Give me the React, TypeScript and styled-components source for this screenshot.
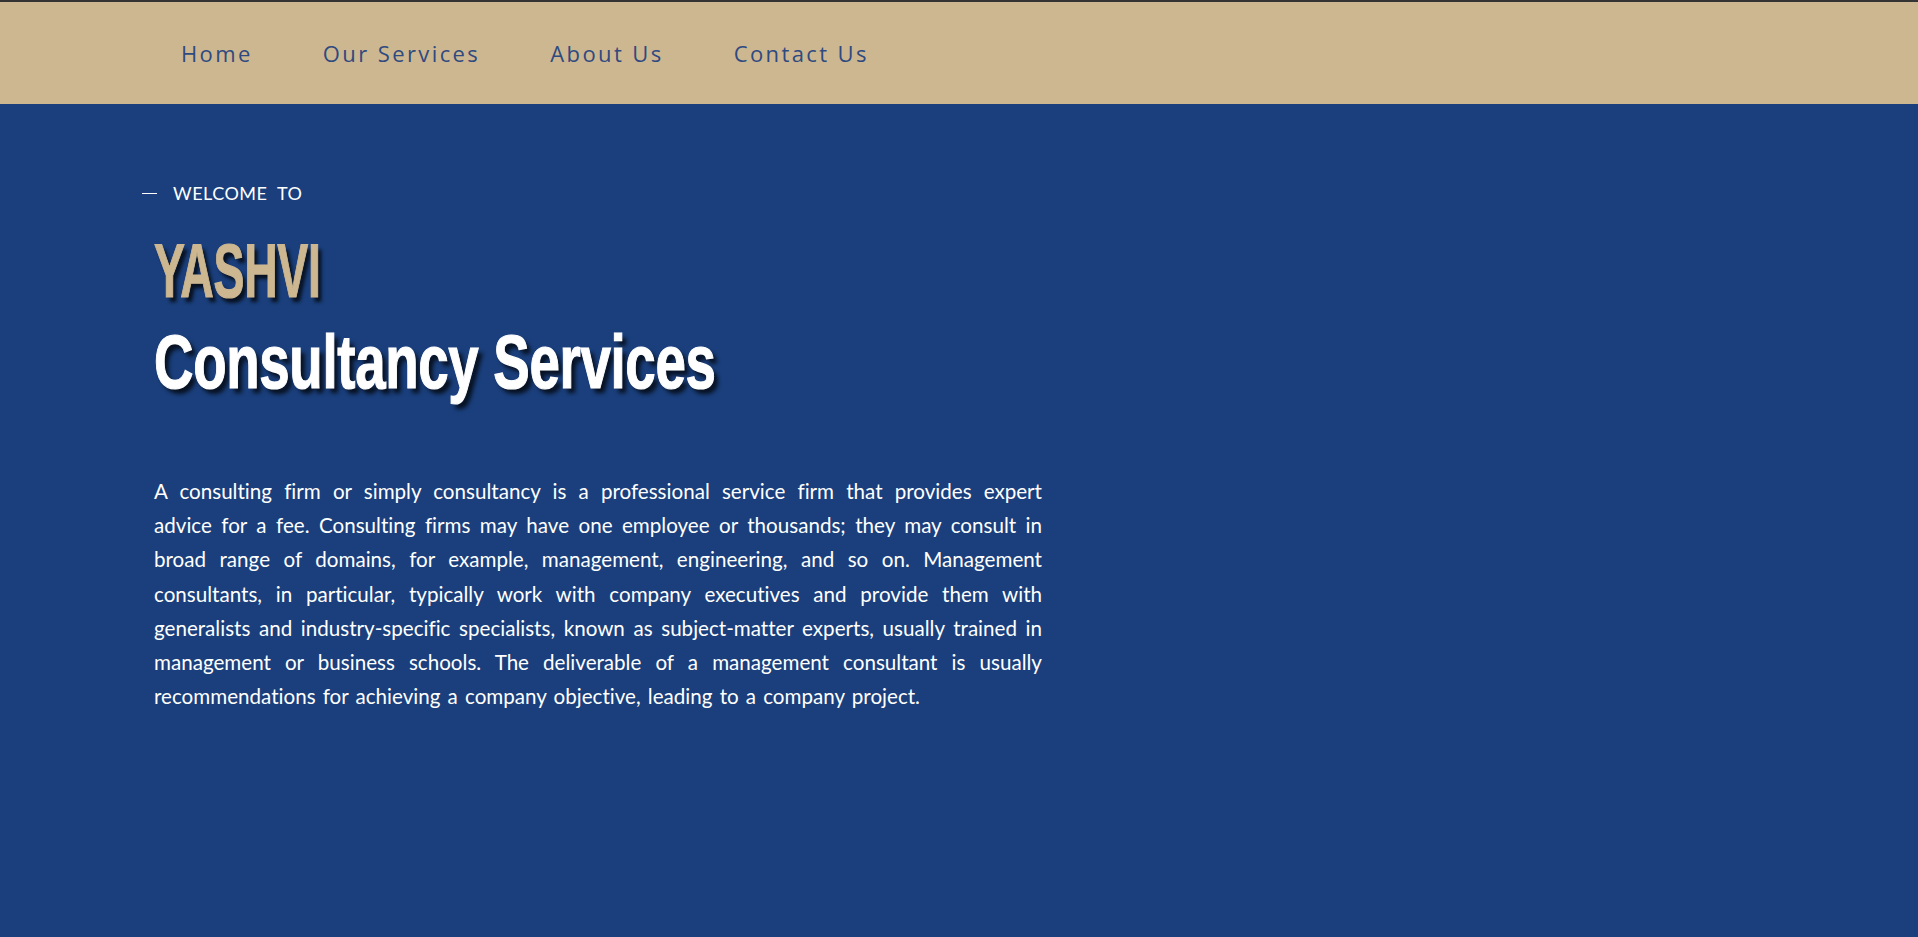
import React from "react";
import styled, { createGlobalStyle } from "styled-components";

const GlobalStyle = createGlobalStyle`
  html, body {
    margin: 0;
    padding: 0;
    background: #1a3f7c;
  }
  * { box-sizing: border-box; }
`;

const Page = styled.div`
  min-height: 937px;
  background: #1a3f7c;
  display: flex;
  flex-direction: column;
`;

const Header = styled.header`
  height: 104px;
  border-top: 2px solid #343434;
  background: #cdb791;
  display: flex;
  align-items: center;
  padding-left: 181px;
`;

const NavList = styled.nav`
  display: flex;
  align-items: center;
  gap: 70px;
`;

const NavLink = styled.a`
  font-family: "Open Sans", "Noto Sans", sans-serif;
  font-size: 22px;
  font-weight: 400;
  letter-spacing: 2.4px;
  color: #2f4a80;
  text-decoration: none;
  line-height: 30px;
  cursor: pointer;
`;

const Hero = styled.section`
  padding: 78px 0 0 154px;
  display: flex;
  flex-direction: column;
  align-items: flex-start;
`;

const Eyebrow = styled.div`
  display: flex;
  align-items: center;
  margin-left: -12px;
  font-family: "Lato", "Open Sans", sans-serif;
  font-size: 18px;
  line-height: 22px;
  color: #ffffff;
  letter-spacing: 0.5px;
  word-spacing: 5px;
`;

const Dash = styled.span`
  display: inline-block;
  width: 15px;
  height: 1px;
  background: #ffffff;
  margin-right: 16px;
  margin-top: 1px;
`;

const Title = styled.h1<{ $color: string; $squeeze: number; $gap: number }>`
  margin: ${(p) => p.$gap}px 0 0 0;
  font-family: "Liberation Sans", Arial, sans-serif;
  font-weight: 700;
  font-size: 76px;
  line-height: 76px;
  letter-spacing: -0.5px;
  color: ${(p) => p.$color};
  -webkit-text-stroke: 1.2px ${(p) => p.$color};
  transform: scaleX(${(p) => p.$squeeze});
  transform-origin: left center;
  text-shadow: 6px 5px 5px rgba(0, 0, 0, 0.75);
  white-space: nowrap;
`;

const Body = styled.p`
  margin: 74px 0 0 0;
  width: 888px;
  font-family: "Lato", "Open Sans", sans-serif;
  font-size: 20.6px;
  line-height: 34.2px;
  word-spacing: 1.9px;
  font-variant-ligatures: no-common-ligatures;
  color: #ffffff;
  text-align: justify;
`;

const links = ["Home", "Our Services", "About Us", "Contact Us"];

export default function App() {
  return (
    <>
      <GlobalStyle />
      <Page>
        <Header>
          <NavList>
            {links.map((l) => (
              <NavLink key={l}>{l}</NavLink>
            ))}
          </NavList>
        </Header>
        <Hero>
          <Eyebrow>
            <Dash />
            WELCOME TO
          </Eyebrow>
          <Title $color="#cdb791" $squeeze={0.61} $gap={29}>
            YASHVI
          </Title>
          <Title $color="#ffffff" $squeeze={0.72} $gap={15}>
            Consultancy Services
          </Title>
          <Body>
            A consulting firm or simply consultancy is a professional service firm that provides expert advice for a fee. Consulting firms may have one employee or thousands; they may consult in broad range of domains, for example, management, engineering, and so on. Management consultants, in particular, typically work with company executives and provide them with generalists and industry-specific specialists, known as subject-matter experts, usually trained in management or business schools. The deliverable of a management consultant is usually recommendations for achieving a company objective, leading to a company project.
          </Body>
        </Hero>
      </Page>
    </>
  );
}
